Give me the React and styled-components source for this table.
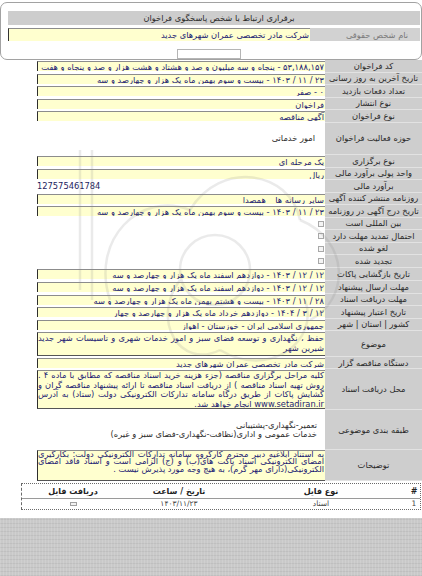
import React from "react";
import styled, { createGlobalStyle } from "styled-components";

const GlobalStyle = createGlobalStyle`
  html, body {
    margin: 0;
    padding: 0;
    background: #fff;
  }
  body {
    font-family: "DejaVu Sans", "Noto Sans Arabic", sans-serif;
    font-size: 8.3px;
    overflow: hidden;
  }
  #root {
    width: 422px;
    height: 576px;
  }
`;

const Page = styled.div`
  position: relative;
  width: 422px;
  height: 576px;
  direction: rtl;
  overflow: hidden;
  display: flex;
  flex-direction: column;
`;

const Panel = styled.section`
  box-sizing: border-box;
  height: 58px;
  margin-top: 2px;
  border: 1px solid #a2a2a2;
  border-radius: 7px;
  padding: 8px 1px 0 7px;
  display: flex;
  flex-direction: column;
`;

const PanelHead = styled.div`
  height: 16px;
  background: #cdcdcd;
  color: #2b2b2b;
  display: flex;
  align-items: center;
  justify-content: center;
  padding-left: 10px;
`;

const PanelRow = styled.div`
  display: grid;
  grid-template-columns: 110px 1fr;
  height: 14px;
  margin-top: 3px;
`;

const PanelLabel = styled.div`
  background: #d2d2d2;
  color: #7a7a7a;
  display: flex;
  align-items: center;
  justify-content: center;
  padding-left: 24px;
`;

const PanelValue = styled.div`
  background: #ffffcf;
  border-left: 1px solid #333;
  border-top: 1px solid #8c8c8c;
  color: #1d1d74;
  display: flex;
  align-items: center;
  padding-right: 1px;
`;

const SmallBox = styled.div`
  align-self: center;
  width: 62px;
  height: 9px;
  margin: 8px 10px 0 0;
  border: 1px solid #b5b5b5;
  background: #fff;
`;

const Table = styled.div`
  display: flex;
  flex-direction: column;
`;

const Row = styled.div`
  display: grid;
  grid-template-columns: 97px 288px;
  height: ${(p) => p.$h || 12.5}px;
`;

const Label = styled.div`
  background: #cecece;
  border-bottom: 1px solid #e2e2e2;
  color: #2a2a2a;
  display: flex;
  align-items: center;
  justify-content: center;
  white-space: nowrap;
`;

const Field = styled.div`
  align-self: ${(p) => (p.$multi ? "stretch" : "center")};
  height: ${(p) => (p.$multi ? "auto" : "10px")};
  margin: ${(p) => (p.$multi ? `${p.$m ?? 1}px 0` : "0")};
  box-sizing: border-box;
  background: #ffffcf;
  border-left: 1px solid #2e2e2e;
  border-top: 1px solid #8c8c8c;
  border-bottom: ${(p) => (p.$multi ? "1px solid #555" : "none")};
  color: #1d1d74;
  padding-right: 1px;
  line-height: ${(p) => p.$lh || 10}px;
  white-space: ${(p) => (p.$multi ? "normal" : "nowrap")};
  text-align: ${(p) => (p.$multi ? "justify" : "right")};
  overflow: hidden;
`;

const Plain = styled.div`
  display: flex;
  flex-direction: column;
  justify-content: center;
  padding-right: ${(p) => p.$pad || 10}px;
  color: #2d2d2d;
  line-height: 9px;
`;

const Number = styled.div`
  direction: ltr;
  text-align: left;
  align-self: center;
  color: #1d1d5e;
  line-height: 10px;
`;

const CheckCell = styled.div`
  display: flex;
  align-items: center;
  padding-right: 1px;
`;

const Check = styled.span`
  width: 4px;
  height: 4px;
  border: 1px solid #a8a8a8;
  background: #f4f4f4;
`;

const Files = styled.div`
  margin: 2px 1px 0 21px;
  border: 1px dotted #6a6a6a;
  border-left-style: dashed;
`;

const FileRow = styled.div`
  display: grid;
  grid-template-columns: 12px 174px 110px 1fr;
  height: ${(p) => (p.$head ? 14 : 9)}px;
  align-items: center;
  font-weight: ${(p) => (p.$head ? "bold" : "normal")};
  color: ${(p) => (p.$head ? "#222" : "#444")};
  border-bottom: 1px solid ${(p) => (p.$head ? "#9a9a9a" : "transparent")};
  font-size: ${(p) => (p.$head ? 8 : 7.5)}px;
`;

const FileCell = styled.div`
  text-align: center;
  white-space: nowrap;
  direction: ${(p) => (p.$ltr ? "ltr" : "rtl")};
`;

const Footer = styled.div`
  flex: 1;
  margin-top: 8px;
  background-color: #c9c9c9;
  background-image: repeating-linear-gradient(
      90deg,
      rgba(255, 255, 255, 0.12) 0 1px,
      transparent 1px 3px
    ),
    repeating-linear-gradient(
      0deg,
      rgba(0, 0, 0, 0.05) 0 1px,
      transparent 1px 4px
    );
`;

const Watermark = styled.svg`
  position: absolute;
  top: 150px;
  left: 70px;
  pointer-events: none;
`;

const FileIcon = () => (
  <svg width="7" height="4" viewBox="0 0 7 4">
    <rect x="0.5" y="0.5" width="6" height="3" fill="#f2f2f2" stroke="#a0a0a0" />
  </svg>
);

const rows = [
  { l: "کد فراخوان", v: "۵۳,۱۸۸,۱۵۷ - پنجاه و سه میلیون و صد و هشتاد و هشت هزار و صد و پنجاه و هفت" },
  { l: "تاریخ آخرین به روز رسانی", v: "۲۳ / ۱۱ / ۱۴۰۳ - بیست و سوم بهمن ماه یک هزار و چهارصد و سه" },
  { l: "تعداد دفعات بازدید", v: "۰ - صفر" },
  { l: "نوع انتشار", v: "فراخوان" },
  { l: "نوع فراخوان", v: "آگهی مناقصه" },
  { l: "حوزه فعالیت فراخوان", plain: ["امور خدماتی"], h: 32.5 },
  { l: "نوع برگزاری", v: "یک مرحله ای" },
  { l: "واحد پولی برآورد مالی", v: "ریال" },
  { l: "برآورد مالی", num: "127575461784" },
  { l: "روزنامه منتشر کننده آگهی", v: "سایر رسانه ها _ همصدا" },
  { l: "تاریخ درج آگهی در روزنامه", v: "۲۳ / ۱۱ / ۱۴۰۳ - بیست و سوم بهمن ماه یک هزار و چهارصد و سه" },
  { l: "بین المللی است", check: true },
  { l: "احتمال تمدید مهلت دارد", check: true },
  { l: "لغو شده", check: true },
  { l: "تجدید شده", check: true },
  { l: "تاریخ بازگشایی پاکات", v: "۱۲ / ۱۲ / ۱۴۰۳ - دوازدهم اسفند ماه یک هزار و چهارصد و سه", h: 13.5 },
  { l: "مهلت ارسال پیشنهاد", v: "۱۲ / ۱۲ / ۱۴۰۳ - دوازدهم اسفند ماه یک هزار و چهارصد و سه" },
  { l: "مهلت دریافت اسناد", v: "۲۸ / ۱۱ / ۱۴۰۳ - بیست و هشتم بهمن ماه یک هزار و چهارصد و سه" },
  { l: "تاریخ اعتبار پیشنهاد", v: "۱۲ / ۳ / ۱۴۰۴ - دوازدهم خرداد ماه یک هزار و چهارصد و چهار" },
  { l: "کشور | استان | شهر", v: "جمهوری اسلامی ایران - خوزستان - اهواز" },
  {
    l: "موضوع",
    v: "حفظ ، نگهداری و توسعه فضای سبز و امور خدمات شهری و تاسیسات شهر جدید شیرین شهر",
    multi: true,
    h: 26,
  },
  { l: "دستگاه مناقصه گزار", v: "شرکت مادر تخصصی عمران شهرهای جدید", h: 12 },
  {
    l: "محل دریافت اسناد",
    v: "کلیه مراحل برگزاری مناقصه (جزء هزینه خرید اسناد مناقصه که مطابق با ماده ۴ . روش تهیه اسناد مناقصه ) از دریافت اسناد مناقصه تا ارائه پیشنهاد مناقصه گران و گشایش پاکات از طریق درگاه سامانه تدارکات الکترونیکی دولت (ستاد) به آدرس www.setadiran.ir انجام خواهد شد.",
    multi: true,
    lh: 9.5,
    h: 41,
  },
  {
    l: "طبقه بندی موضوعی",
    plain: ["تعمیر-نگهداری-پشتیبانی", "خدمات عمومی و اداری(نظافت-نگهداری-فضای سبز و غیره)"],
    pad: 8,
    h: 40,
  },
  {
    l: "توضیحات",
    v: "به استناد ابلاغیه دبیر محترم کارگروه سامانه تدارکات الکترونیکی دولت: بکارگیری امضای الکترونیکی اسناد پاکت های(ب) و (ج) الزامی است و اسناد فاقد امضای الکترونیکی(دارای مهر گرم)، به هیچ وجه مورد پذیرش نیست .",
    multi: true,
    lh: 7.3,
    m: 0,
    h: 31,
  },
];

const renderValue = (r) => {
  if (r.check)
    return (
      <CheckCell>
        <Check />
      </CheckCell>
    );
  if (r.num) return <Number>{r.num}</Number>;
  if (r.plain)
    return (
      <Plain $pad={r.pad}>
        {r.plain.map((t) => (
          <div key={t}>{t}</div>
        ))}
      </Plain>
    );
  return (
    <Field $multi={r.multi} $lh={r.lh} $m={r.m}>
      {r.v}
    </Field>
  );
};

export default function App() {
  return (
    <>
      <GlobalStyle />
      <Page>
        <Panel>
          <PanelHead>برقراری ارتباط با شخص پاسخگوی فراخوان</PanelHead>
          <PanelRow>
            <PanelLabel>نام شخص حقوقی</PanelLabel>
            <PanelValue>شرکت مادر تخصصی عمران شهرهای جدید</PanelValue>
          </PanelRow>
          <SmallBox />
        </Panel>

        <Table>
          {rows.map((r) => (
            <Row key={r.l} $h={r.h}>
              <Label>{r.l}</Label>
              {renderValue(r)}
            </Row>
          ))}
        </Table>

        <Files>
          <FileRow $head>
            <FileCell>#</FileCell>
            <FileCell>نوع فایل</FileCell>
            <FileCell>تاریخ / ساعت</FileCell>
            <FileCell>دریافت فایل</FileCell>
          </FileRow>
          <FileRow>
            <FileCell>1</FileCell>
            <FileCell>اسناد</FileCell>
            <FileCell $ltr>۱۴۰۳/۱۱/۲۳</FileCell>
            <FileCell>
              <FileIcon />
            </FileCell>
          </FileRow>
        </Files>

        <Footer />

        <Watermark width="290" height="260" viewBox="0 0 290 260">
          <g fill="none" stroke="rgba(140,140,140,0.18)" strokeWidth="2.5">
            <path d="M10 0 L 10 140" />
            <path d="M22 0 L 22 150" />
            <path d="M40 150 C 20 90, 70 40, 120 60" />
            <path d="M120 60 C 150 10, 220 20, 230 70" />
            <path d="M230 70 C 280 90, 280 150, 240 170" />
            <path d="M110 130 C 80 170, 110 220, 150 200" />
            <path d="M150 200 C 200 230, 250 190, 235 150" />
            <circle cx="145" cy="120" r="35" />
          </g>
        </Watermark>
      </Page>
    </>
  );
}
